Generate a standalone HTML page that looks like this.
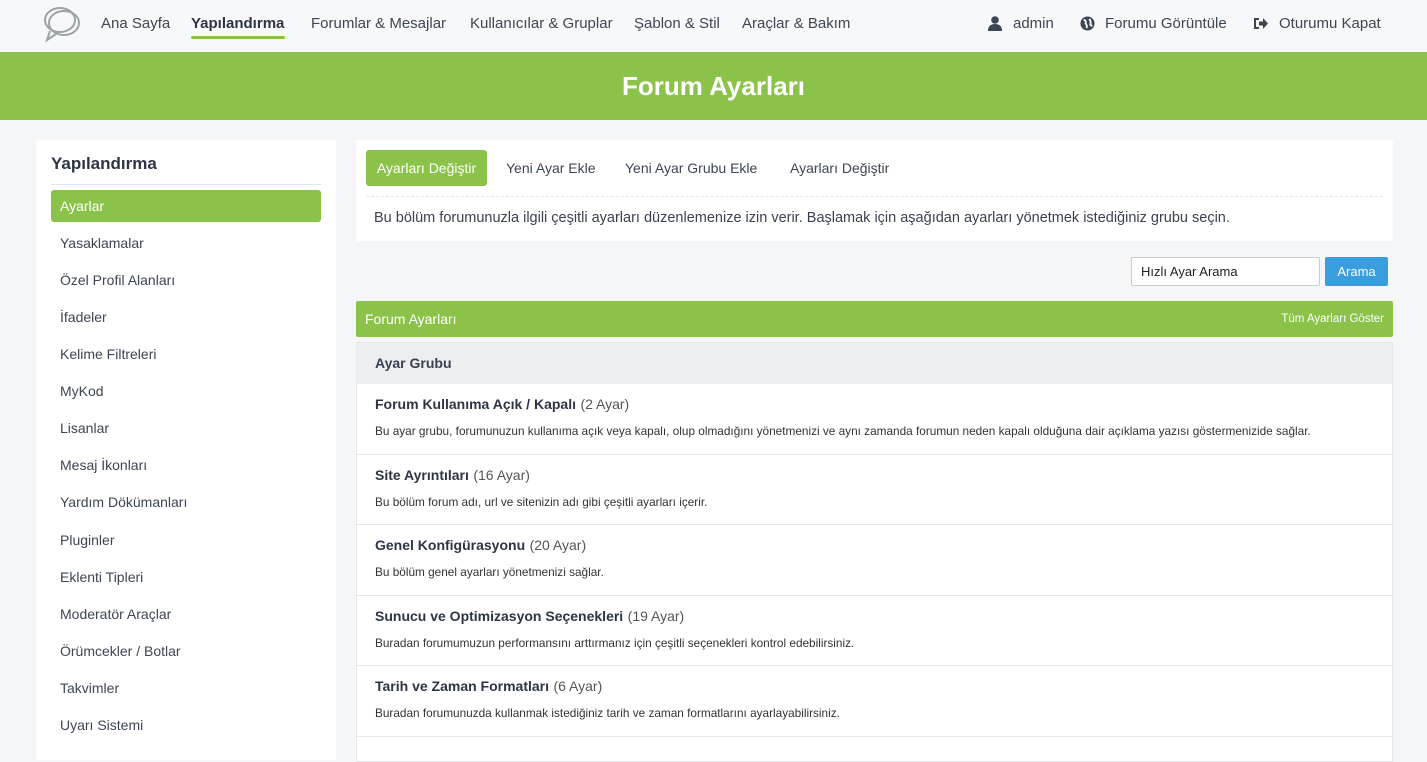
<!DOCTYPE html>
<html><head><meta charset="utf-8"><style>
*{box-sizing:border-box;margin:0;padding:0}
body{width:1427px;height:751px;overflow:hidden;background:#f5f6f8;font-family:"Liberation Sans",sans-serif;color:#3a4150;position:relative}
.top{position:absolute;left:0;top:0;width:1427px;height:52px;background:#f7f8fa}
.top a{position:absolute;top:15px;font-size:15px;color:#3d4653;white-space:nowrap}
.banner{position:absolute;top:52px;left:0;width:1427px;height:68px;background:#8bc34a;color:#fff;font-weight:bold;font-size:26px;text-align:center;line-height:68px}
.side{position:absolute;left:36px;top:140px;width:300px;height:620px;background:#fff;border-radius:3px}
.side h3{position:absolute;left:15px;top:14px;font-size:17px;color:#2d3545}
.side .ln{position:absolute;left:15px;right:15px;top:44px;border-top:1px solid #e6e8eb}
.side .it{position:absolute;left:15px;width:270px;height:32px;line-height:32px;padding-left:9px;font-size:14px;color:#3d4653}
.side .act{background:#8bc34a;color:#fff;border-radius:3px}
.box{position:absolute;left:356px;top:140px;width:1037px;height:101px;background:#fff}
.tab{position:absolute;top:10px;height:36px;line-height:36px;font-size:14px;color:#3d4653;padding:0 9px}
.tab.on{background:#8bc34a;color:#fff;border-radius:3px;width:121px;text-align:center;padding:0}
.dash{position:absolute;left:10px;right:10px;top:56px;border-top:1px dashed #e2e4e7}
.inp{position:absolute;left:1131px;top:257px;width:189px;height:29px;border:1px solid #ccc;background:#fff;border-radius:2px;font-size:13px;padding:6px 9px;color:#222}
.btn{position:absolute;left:1325px;top:257px;width:63px;height:29px;background:#3a9ddd;color:#fff;font-size:13px;text-align:center;line-height:29px;border-radius:2px}
.hd{position:absolute;left:356px;top:301px;width:1037px;height:36px;background:#8bc34a;color:#fff;border-radius:2px}
.tbl{position:absolute;left:356px;top:342px;width:1037px;height:420px;background:#fff;border:1px solid #e5e7ea}
.gh{height:41px;background:#eceef0;font-weight:bold;font-size:14px;line-height:41px;padding-left:18px}
.row{height:70.5px;border-bottom:1px solid #e5e7ea;padding:12px 18px 0}
.row b{font-size:14px;color:#2d3545}.row span.c{font-size:14px;color:#555}
.row p{font-size:11.8px;margin-top:10px;color:#333}
</style></head><body>
<div class="top">
<svg style="position:absolute;left:42px;top:5px" width="40" height="38" viewBox="0 0 40 38" fill="none" stroke="#9aa3a8" stroke-width="2"><ellipse cx="18" cy="15" rx="15" ry="12"/><ellipse cx="22" cy="18" rx="15" ry="12"/><path d="M8 26 L5 35 L14 29"/></svg>
<a style="left:101px">Ana Sayfa</a>
<a style="left:191px;font-weight:bold;color:#2d3545">Yapılandırma</a>
<div style="position:absolute;left:191px;top:36px;width:94px;height:3px;background:#8bc34a;border-radius:2px"></div>
<a style="left:311px">Forumlar &amp; Mesajlar</a>
<a style="left:470px">Kullanıcılar &amp; Gruplar</a>
<a style="left:634px">Şablon &amp; Stil</a>
<a style="left:742px">Araçlar &amp; Bakım</a>
<svg style="position:absolute;left:988px;top:16px" width="14" height="15" viewBox="0 0 14 15" fill="#3d4653"><circle cx="7" cy="4" r="3.8"/><path d="M0 15 Q0 8 7 8 Q14 8 14 15Z"/></svg>
<a style="left:1013px">admin</a>
<svg style="position:absolute;left:1080px;top:16px" width="15" height="15" viewBox="0 0 16 16"><circle cx="8" cy="8" r="7.5" fill="#3d4653"/><path d="M4 4 Q7 5 6 8 Q8 10 7 13 M10 3 Q12 6 11 9 L13 11" stroke="#f7f8fa" stroke-width="2" fill="none"/></svg>
<a style="left:1105px">Forumu Görüntüle</a>
<svg style="position:absolute;left:1253px;top:17px" width="15" height="13" viewBox="0 0 15 13" fill="#3d4653"><path d="M1 1h5v2H3v7h3v2H1z"/><path d="M6 4.5h4V1l5 5.5-5 5.5V8.5H6z"/></svg>
<a style="left:1279px">Oturumu Kapat</a>
</div>
<div class="banner">Forum Ayarları</div>
<div class="side"><h3>Yapılandırma</h3><div class="ln"></div>
<div class="it act" style="top:50px">Ayarlar</div>
<div class="it" style="top:87px">Yasaklamalar</div>
<div class="it" style="top:124px">Özel Profil Alanları</div>
<div class="it" style="top:161px">İfadeler</div>
<div class="it" style="top:198px">Kelime Filtreleri</div>
<div class="it" style="top:235px">MyKod</div>
<div class="it" style="top:272px">Lisanlar</div>
<div class="it" style="top:309px">Mesaj İkonları</div>
<div class="it" style="top:346px">Yardım Dökümanları</div>
<div class="it" style="top:384px">Pluginler</div>
<div class="it" style="top:421px">Eklenti Tipleri</div>
<div class="it" style="top:458px">Moderatör Araçlar</div>
<div class="it" style="top:495px">Örümcekler / Botlar</div>
<div class="it" style="top:532px">Takvimler</div>
<div class="it" style="top:569px">Uyarı Sistemi</div>
</div>
<div class="box">
<div class="tab on" style="left:10px">Ayarları Değiştir</div>
<div class="tab" style="left:141px">Yeni Ayar Ekle</div>
<div class="tab" style="left:260px">Yeni Ayar Grubu Ekle</div>
<div class="tab" style="left:425px">Ayarları Değiştir</div>
<div class="dash"></div>
<div style="position:absolute;left:18px;top:70px;font-size:14.5px">Bu bölüm forumunuzla ilgili çeşitli ayarları düzenlemenize izin verir. Başlamak için aşağıdan ayarları yönetmek istediğiniz grubu seçin.</div>
</div>
<div class="inp">Hızlı Ayar Arama</div><div class="btn">Arama</div>
<div class="hd"><span style="position:absolute;left:9px;top:10px;font-size:14px">Forum Ayarları</span><span style="position:absolute;right:9px;top:12px;font-size:11.5px">Tüm Ayarları Göster</span></div>
<div class="tbl">
<div class="gh">Ayar Grubu</div>
<div class="row"><b>Forum Kullanıma Açık / Kapalı</b> <span class="c">(2 Ayar)</span><p>Bu ayar grubu, forumunuzun kullanıma açık veya kapalı, olup olmadığını yönetmenizi ve aynı zamanda forumun neden kapalı olduğuna dair açıklama yazısı göstermenizide sağlar.</p></div>
<div class="row"><b>Site Ayrıntıları</b> <span class="c">(16 Ayar)</span><p>Bu bölüm forum adı, url ve sitenizin adı gibi çeşitli ayarları içerir.</p></div>
<div class="row"><b>Genel Konfigürasyonu</b> <span class="c">(20 Ayar)</span><p>Bu bölüm genel ayarları yönetmenizi sağlar.</p></div>
<div class="row"><b>Sunucu ve Optimizasyon Seçenekleri</b> <span class="c">(19 Ayar)</span><p>Buradan forumumuzun performansını arttırmanız için çeşitli seçenekleri kontrol edebilirsiniz.</p></div>
<div class="row"><b>Tarih ve Zaman Formatları</b> <span class="c">(6 Ayar)</span><p>Buradan forumunuzda kullanmak istediğiniz tarih ve zaman formatlarını ayarlayabilirsiniz.</p></div>
</div>
</body></html>
